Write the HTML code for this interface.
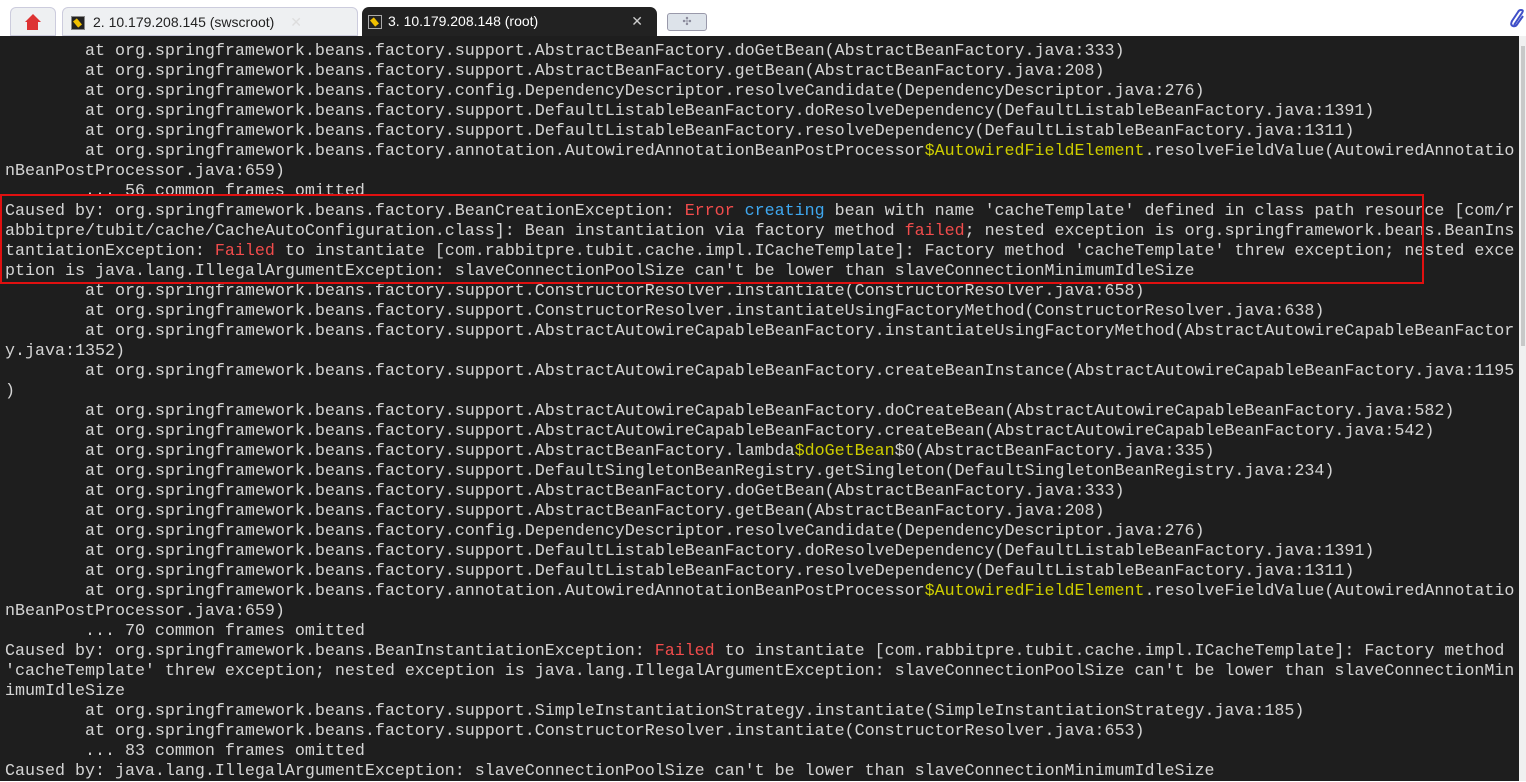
<!DOCTYPE html>
<html><head><meta charset="utf-8"><style>
body{margin:0;width:1526px;height:781px;overflow:hidden;background:#fff;position:relative;font-family:"Liberation Sans",sans-serif}
.tabbar{position:absolute;left:0;top:0;width:1526px;height:36px;background:#fff;border-bottom:1px solid #aab}
.tab{position:absolute;top:7px;height:29px;border-radius:6px 6px 0 0;font-size:14px;line-height:29px;box-sizing:border-box}
.t1{left:62px;width:296px;background:#eef0f2;border:1px solid #ccd;color:#222;padding-left:30px}
.ico{position:absolute;left:8px;top:8px;width:12px;height:12px;background:#222;border:1px solid #888}
.ico:after{content:"";position:absolute;left:3px;top:2px;width:5px;height:8px;background:#f0c000;transform:rotate(-40deg)}
.term{position:absolute;left:0;top:36px;width:1519px;height:745px;background:#1e1e1e}
.sb{position:absolute;left:1519px;top:36px;width:7px;height:745px;background:#f0f0f0}
pre{position:absolute;left:5px;top:6px;margin:0;font-family:"Liberation Mono","DejaVu Sans Mono",monospace;font-size:16.67px;line-height:20px;color:#d4d4d4;white-space:pre}
.r{color:#f14c4c}.b{color:#3fa8f0}.y{color:#cdcd00}
.box{position:absolute;left:0;top:194px;width:1424px;height:90px;border:2px solid #e01010;box-sizing:border-box}
</style></head><body>
<div class="tabbar">
 <div style="position:absolute;left:10px;top:7px;width:46px;height:29px;background:#eef0f2;border:1px solid #ccd;border-radius:6px 6px 0 0;box-sizing:border-box">
  <div style="position:absolute;left:16px;top:14px;width:11px;height:8px;background:#d33"></div>
  <div style="position:absolute;left:14px;top:6px;width:0;height:0;border-left:8px solid transparent;border-right:8px solid transparent;border-bottom:8px solid #d33"></div>
 </div>
 <div class="tab t1"><span class="ico" style="left:8px"></span>2. 10.179.208.145 (swscroot)<span style="position:absolute;right:55px;color:#ddd">✕</span></div>
 <div class="tab" style="left:362px;width:295px;background:#222;color:#fff;padding-left:26px;border-radius:7px 7px 0 0"><span class="ico" style="left:6px;border-color:#aaa"></span>3. 10.179.208.148 (root)<span style="position:absolute;right:14px;color:#ccc">✕</span></div>
 <div style="position:absolute;left:667px;top:13px;width:38px;height:16px;background:#dde3ea;border:1px solid #99a;border-radius:3px;color:#889;font-size:11px;text-align:center;line-height:16px">✣</div>
 <svg style="position:absolute;left:1510px;top:9px" width="16" height="20" viewBox="0 0 16 20"><path d="M4 16 L12 4 Q14 1 11 1 Q9 1 8 3 L2 12 Q0 16 3 17 Q6 18 8 14 L13 7" fill="none" stroke="#3f4fc8" stroke-width="2"/></svg>
</div>
<div class="term">
<pre>        at org.springframework.beans.factory.support.AbstractBeanFactory.doGetBean(AbstractBeanFactory.java:333)
        at org.springframework.beans.factory.support.AbstractBeanFactory.getBean(AbstractBeanFactory.java:208)
        at org.springframework.beans.factory.config.DependencyDescriptor.resolveCandidate(DependencyDescriptor.java:276)
        at org.springframework.beans.factory.support.DefaultListableBeanFactory.doResolveDependency(DefaultListableBeanFactory.java:1391)
        at org.springframework.beans.factory.support.DefaultListableBeanFactory.resolveDependency(DefaultListableBeanFactory.java:1311)
        at org.springframework.beans.factory.annotation.AutowiredAnnotationBeanPostProcessor<span class="y">$AutowiredFieldElement</span>.resolveFieldValue(AutowiredAnnotatio
nBeanPostProcessor.java:659)
        ... 56 common frames omitted
Caused by: org.springframework.beans.factory.BeanCreationException: <span class="r">Error</span> <span class="b">creating</span> bean with name 'cacheTemplate' defined in class path resource [com/r
abbitpre/tubit/cache/CacheAutoConfiguration.class]: Bean instantiation via factory method <span class="r">failed</span>; nested exception is org.springframework.beans.BeanIns
tantiationException: <span class="r">Failed</span> to instantiate [com.rabbitpre.tubit.cache.impl.ICacheTemplate]: Factory method 'cacheTemplate' threw exception; nested exce
ption is java.lang.IllegalArgumentException: slaveConnectionPoolSize can't be lower than slaveConnectionMinimumIdleSize
        at org.springframework.beans.factory.support.ConstructorResolver.instantiate(ConstructorResolver.java:658)
        at org.springframework.beans.factory.support.ConstructorResolver.instantiateUsingFactoryMethod(ConstructorResolver.java:638)
        at org.springframework.beans.factory.support.AbstractAutowireCapableBeanFactory.instantiateUsingFactoryMethod(AbstractAutowireCapableBeanFactor
y.java:1352)
        at org.springframework.beans.factory.support.AbstractAutowireCapableBeanFactory.createBeanInstance(AbstractAutowireCapableBeanFactory.java:1195
)
        at org.springframework.beans.factory.support.AbstractAutowireCapableBeanFactory.doCreateBean(AbstractAutowireCapableBeanFactory.java:582)
        at org.springframework.beans.factory.support.AbstractAutowireCapableBeanFactory.createBean(AbstractAutowireCapableBeanFactory.java:542)
        at org.springframework.beans.factory.support.AbstractBeanFactory.lambda<span class="y">$doGetBean</span>$0(AbstractBeanFactory.java:335)
        at org.springframework.beans.factory.support.DefaultSingletonBeanRegistry.getSingleton(DefaultSingletonBeanRegistry.java:234)
        at org.springframework.beans.factory.support.AbstractBeanFactory.doGetBean(AbstractBeanFactory.java:333)
        at org.springframework.beans.factory.support.AbstractBeanFactory.getBean(AbstractBeanFactory.java:208)
        at org.springframework.beans.factory.config.DependencyDescriptor.resolveCandidate(DependencyDescriptor.java:276)
        at org.springframework.beans.factory.support.DefaultListableBeanFactory.doResolveDependency(DefaultListableBeanFactory.java:1391)
        at org.springframework.beans.factory.support.DefaultListableBeanFactory.resolveDependency(DefaultListableBeanFactory.java:1311)
        at org.springframework.beans.factory.annotation.AutowiredAnnotationBeanPostProcessor<span class="y">$AutowiredFieldElement</span>.resolveFieldValue(AutowiredAnnotatio
nBeanPostProcessor.java:659)
        ... 70 common frames omitted
Caused by: org.springframework.beans.BeanInstantiationException: <span class="r">Failed</span> to instantiate [com.rabbitpre.tubit.cache.impl.ICacheTemplate]: Factory method
'cacheTemplate' threw exception; nested exception is java.lang.IllegalArgumentException: slaveConnectionPoolSize can't be lower than slaveConnectionMin
imumIdleSize
        at org.springframework.beans.factory.support.SimpleInstantiationStrategy.instantiate(SimpleInstantiationStrategy.java:185)
        at org.springframework.beans.factory.support.ConstructorResolver.instantiate(ConstructorResolver.java:653)
        ... 83 common frames omitted
Caused by: java.lang.IllegalArgumentException: slaveConnectionPoolSize can't be lower than slaveConnectionMinimumIdleSize</pre>
</div>
<div class="box"></div>
<div class="sb"><div style="position:absolute;left:2px;top:10px;width:4px;height:300px;background:#c8c8c8"></div></div>
</body></html>
